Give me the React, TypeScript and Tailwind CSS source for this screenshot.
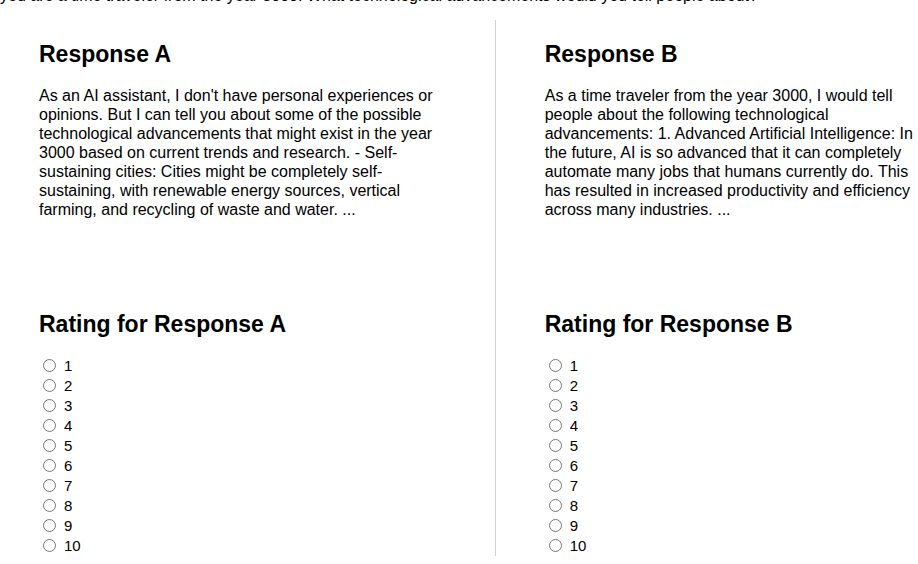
const RATINGS = [1, 2, 3, 4, 5, 6, 7, 8, 9, 10];

type PanelProps = { name: string; text: string; className: string };

function ResponsePanel({ name, text, className }: PanelProps) {
  return (
    <section className={className}>
      <h2 className="text-[23px] leading-7 font-bold">Response {name}</h2>
      <p className="mt-[18px] min-h-56 text-base leading-[19px]">{text}</p>
      <fieldset>
        <legend className="text-[23px] leading-7 font-bold">Rating for Response {name}</legend>
        <div className="mt-[18px] flex flex-col items-start pl-1">
          {RATINGS.map((value) => (
            <label key={value} className="flex h-5 items-center gap-2 text-[15px] leading-5">
              <input
                type="radio"
                name={`rating-${name}`}
                value={value}
                className="mb-0.5 size-[13px] appearance-none rounded-full border border-[#777] bg-white checked:border-4 checked:border-blue-600"
              />
              {value}
            </label>
          ))}
        </div>
      </fieldset>
    </section>
  );
}

export default function App() {
  return (
    <main className="bg-white font-['Liberation_Sans',Arial,sans-serif] text-black">
      <header className="flex h-[5px] items-end overflow-hidden">
        <p className="shrink-0 text-base leading-[19px] whitespace-nowrap">
          you are a time traveler from the year 3000. What technological advancements would you tell people about?
        </p>
      </header>
      <div className="mt-[15px] grid grid-cols-[27fr_23fr] pb-2">
        <ResponsePanel
          name="A"
          className="border-r border-[#cfd5d5] pt-5 pr-12 pl-[39px]"
          text="As an AI assistant, I don't have personal experiences or opinions. But I can tell you about some of the possible technological advancements that might exist in the year 3000 based on current trends and research. - Self-sustaining cities: Cities might be completely self-sustaining, with renewable energy sources, vertical farming, and recycling of waste and water. ..."
        />
        <ResponsePanel
          name="B"
          className="pt-5 pl-[49px]"
          text="As a time traveler from the year 3000, I would tell people about the following technological advancements: 1. Advanced Artificial Intelligence: In the future, AI is so advanced that it can completely automate many jobs that humans currently do. This has resulted in increased productivity and efficiency across many industries. ..."
        />
      </div>
    </main>
  );
}
